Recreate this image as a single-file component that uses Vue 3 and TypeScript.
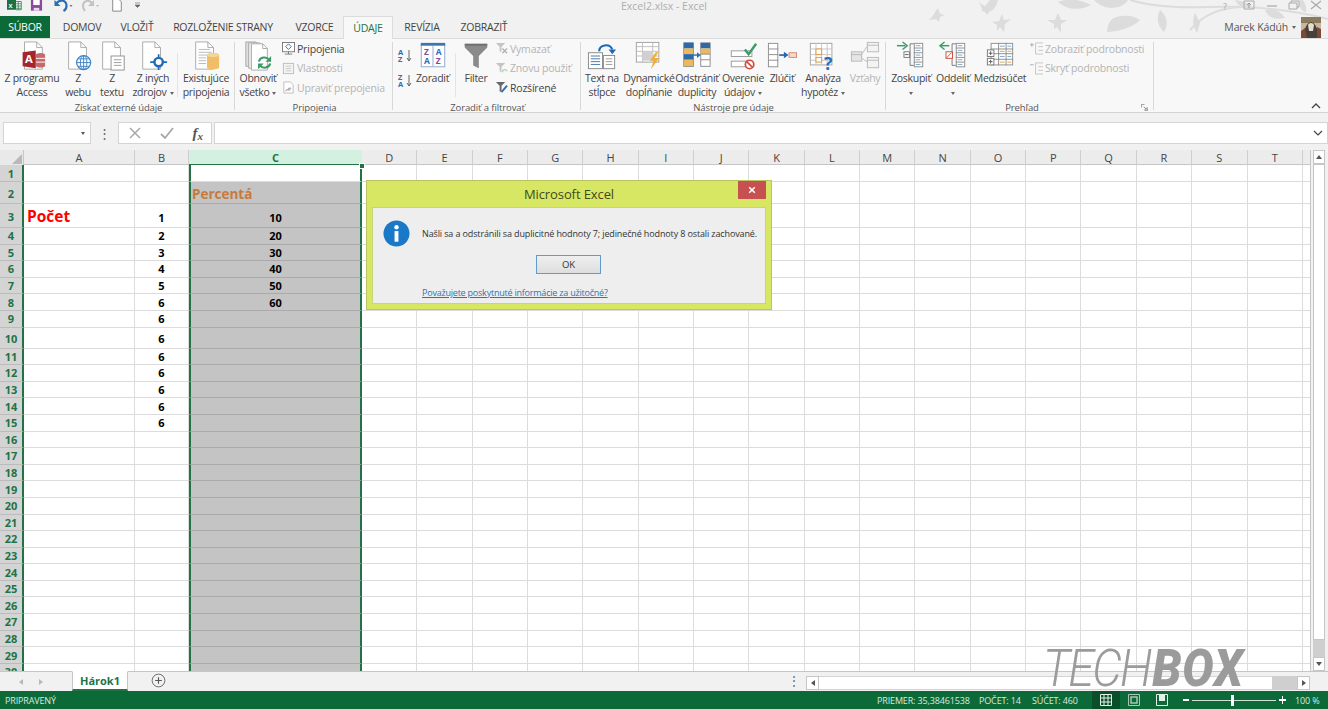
<template>
  <div class="excel">
    <!-- Title bar -->
    <header class="titlebar">
      <div class="qat">
        <svg class="qat-logo" viewBox="0 0 20 14"><rect width="12" height="14" y="-2" fill="#1d7044" /><text x="2" y="9" class="xl-letter">X</text><path d="M12 1h7v11h-7M12 4h7M12 7h7M12 10h7M15 1v11" fill="#fff" stroke="#1d7044" /></svg>
        <svg class="qat-save" viewBox="0 0 14 12"><path d="M1 -2h12v13H1z" fill="#8a4a9c" /><rect x="3.500" y="-1" width="7" height="6" fill="#fff" /><rect x="4" y="8" width="6" height="3" fill="#e8dcec" /></svg>
        <svg class="qat-undo" viewBox="0 0 20 12"><path d="M3 3c4-4 10-3 10 3 0 2-1 4-3 5" fill="none" stroke="#2b6fb3" stroke-width="2.200" /><path d="M1 0v6h6z" fill="#2b6fb3" /><path d="M16 5h3l-1.500 2z" fill="#777" /></svg>
        <svg class="qat-redo" viewBox="0 0 20 12"><path d="M12 3c-4-4-9-2-9 3 0 2 1 4 2 5" fill="none" stroke="#c2c2c2" stroke-width="2" /><path d="M14 0v6H8z" fill="#c2c2c2" /><path d="M16 5h3l-1.500 2z" fill="#bbb" /></svg>
        <svg class="qat-new" viewBox="0 0 12 14"><path d="M1 -2h6l4 4v11H1z" fill="#fff" stroke="#777" /></svg>
        <svg class="qat-more" viewBox="0 0 6 6"><path d="M0 1h5M0 3h5l-2.500 2.500z" fill="#666" stroke="#666" stroke-width=".6" /></svg>
      </div>
      <div class="doc-title">Excel2.xlsx - Excel</div>
      <svg class="birds" viewBox="918 0 410 37">
        <g fill="#dcdcdc">
          <path d="M928 20c3-1 6-5 7-8l3-4c1 3 1 5 3 6l4 1-5 2-1 5-3-3z" />
          <path d="M978 0c2 3 4 5 7 6l5-6h8c-1 5-4 10-9 12l-2 3-2-3-3-1c0-4-2-7-4-11z" />
          <path d="M992 22l7-1 3-7 2 6 7-1-6 5-1 8-4-5-3 4 0-6z" />
          <path d="M1047 20l8 0 3-7 3 7 6 0-6 4 0 9-4-6-3 2 0-5z" />
          <path d="M1058 2c9-4 22-3 33 3-9 5-23 6-33-3z" />
          <path d="M1094 0h34c-5 9-23 12-34 0z" />
          <path d="M1112 19c10-5 21-4 28 1-7 7-18 11-33 12 0-5 2-10 5-13z" />
          <path d="M1160 10c7 6 9 14 4 22-6-5-8-14-4-22z" />
          <path d="M1195 13l5 10-3 10c-4-6-5-13-2-20z" />
          <path d="M1235 0c8 1 14 3 17 8-8 1-14-2-17-8z" />
          <path d="M1265 10c9-2 16 1 20 8-9 2-17 0-20-8z" />
          <path d="M1300 -2c4 2 7 8 6 14-5 0-8-7-6-14z" />
        </g>
        <path d="M1130 0c20 6 50 8 78 7 35-1 70 0 120 12M1190 30c12-14 28-22 50-23" fill="none" stroke="#dcdcdc" stroke-width="2" />
      </svg>
      <div class="win-btns">
        <span class="help">?</span>
        <svg viewBox="0 0 12 10" class="w-box"><path d="M1 1h10v8H1z" fill="none" stroke="#aaa" /><path d="M6 8V3M4 5l2-2 2 2" fill="none" stroke="#999" /></svg>
        <svg viewBox="0 0 10 10" class="w-min"><path d="M0 6h10" stroke="#aaa" stroke-width="1.200" /></svg>
        <svg viewBox="0 0 12 10" class="w-res"><path d="M1 3h8v6H1zM3 3V1h8v6H9" fill="none" stroke="#aaa" /></svg>
        <svg viewBox="0 0 12 10" class="w-cls"><path d="M1 1l10 8M11 1L1 9" stroke="#aaa" stroke-width="1.200" /></svg>
      </div>
    </header>

    <!-- Tabs -->
    <nav class="tabs">
      <div class="tab file">SÚBOR</div>
      <div class="tab t-home">DOMOV</div>
      <div class="tab t-ins">VLOŽIŤ</div>
      <div class="tab t-lay">ROZLOŽENIE STRANY</div>
      <div class="tab t-for">VZORCE</div>
      <div class="tab active">ÚDAJE</div>
      <div class="tab t-rev">REVÍZIA</div>
      <div class="tab t-vie">ZOBRAZIŤ</div>
      <div class="user">
        <span class="user-name">Marek Kádúh</span>
        <span class="user-caret"></span>
        <svg class="avatar" viewBox="0 0 20 21">
          <rect width="20" height="21" fill="#c9b79a" />
          <rect width="20" height="6" fill="#8c7a5f" />
          <path d="M2 21c1-8 3-15 8-16 5 1 7 8 8 16z" fill="#4a3f38" />
          <path d="M7 8c2-3 5-2 6 0l-1 6H8z" fill="#e3ddd2" />
          <path d="M0 14l4-3 2 10H0zM16 10l4 2v9h-4z" fill="#7a4a35" />
        </svg>
      </div>
    </nav>

    <!-- Ribbon -->
    <section class="ribbon">
      <div class="group g-ext">
        <div class="group-body">
          <div class="big w-access">
            <svg class="icon" viewBox="0 0 32 32"><path d="M8 1h13l6 6v23H8z" fill="#fff" stroke="#a9a9a9" /><path d="M21 1v6h6" fill="none" stroke="#a9a9a9" /><path d="M20 15c0-3 10-3 10 0v11c0 3-10 3-10 0z" fill="#c46a6d" /><path d="M20 18.500h10M20 22.500h10" stroke="#fff" /><path d="M6 12l14-2v19L6 27z" fill="#a4262c" /><text x="8.500" y="23.500" class="ic-a">A</text></svg>
            <span class="lbl">Z programu<br />Access</span>
          </div>
          <div class="big w-web">
            <svg class="icon" viewBox="0 0 32 32"><path d="M6 1h13l6 6v23H6z" fill="#fff" stroke="#a9a9a9" /><path d="M19 1v6h6" fill="none" stroke="#a9a9a9" /><circle cx="22" cy="23" r="7.500" fill="#fff" stroke="#3f83c5" stroke-width="1.300" /><path d="M14.500 23h15M22 15.500v15M16 19h12M16 27h12" stroke="#3f83c5" /><ellipse cx="22" cy="23" rx="3.500" ry="7.500" fill="none" stroke="#3f83c5" /></svg>
            <span class="lbl">Z<br />webu</span>
          </div>
          <div class="big w-text">
            <svg class="icon" viewBox="0 0 32 32"><path d="M6 1h13l6 6v23H6z" fill="#fff" stroke="#a9a9a9" /><path d="M19 1v6h6" fill="none" stroke="#a9a9a9" /><rect x="15" y="16" width="14" height="15" fill="#fff" stroke="#8f8f8f" /><path d="M18 20h8M18 23h8M18 26h8" stroke="#9b9b9b" /></svg>
            <span class="lbl">Z<br />textu</span>
          </div>
          <div class="big w-other">
            <svg class="icon" viewBox="0 0 32 32"><path d="M5 1h13l6 6v23H5z" fill="#fff" stroke="#a9a9a9" /><path d="M18 1v6h6" fill="none" stroke="#a9a9a9" /><path d="M22 14v17M13 22.500h18" stroke="#1f6ab5" stroke-width="1.800" /><circle cx="22" cy="22.500" r="4.500" fill="#fff" stroke="#1f6ab5" stroke-width="2.600" /></svg>
            <span class="lbl">Z iných<br />zdrojov<i class="caret in"></i></span>
          </div>
          <div class="vsep"></div>
          <div class="big w-exist">
            <svg class="icon" viewBox="0 0 32 32"><path d="M5 1h13l6 6v23H5z" fill="#fff" stroke="#a9a9a9" /><path d="M18 1v6h6" fill="none" stroke="#a9a9a9" /><path d="M8 9h12M8 12h14M8 15h14M8 18h8M8 21h8M8 24h8" stroke="#b7b7b7" /><path d="M17 15c0-3 13-3 13 0v13c0 3-13 3-13 0z" fill="#efbe67" /><ellipse cx="23.500" cy="15" rx="6.500" ry="2" fill="#f6d696" /></svg>
            <span class="lbl">Existujúce<br />pripojenia</span>
          </div>
        </div>
        <div class="group-label">Získať externé údaje</div>
      </div>

      <div class="group g-conn">
        <div class="group-body">
          <div class="big w-refresh">
            <svg class="icon" viewBox="0 0 32 32"><path d="M3 1h11l5 5v21H3z" fill="#e0e0e0" stroke="#a9a9a9" /><path d="M6 2h12l5 5v22H6z" fill="#ececec" stroke="#a9a9a9" /><path d="M9 3h12l5 5v23H9z" fill="#fff" stroke="#a9a9a9" /><path d="M21 3v5h5" fill="none" stroke="#a9a9a9" /><path d="M17 22c1-5 8-6 11-2M29 24c-1 5-8 6-11 2" fill="none" stroke="#3f9a6a" stroke-width="2.200" /><path d="M30 16v6h-6zM16 30v-6h6z" fill="#3f9a6a" /></svg>
            <span class="lbl">Obnoviť<br />všetko<i class="caret in"></i></span>
          </div>
          <div class="smalls s-conn">
            <div class="small">
              <svg viewBox="0 0 14 14"><rect x=".5" y=".5" width="13" height="10" fill="#fff" stroke="#777" /><path d="M7 2l3 3-3 3-3-3z" fill="#fff" stroke="#2a6fb6" /><path d="M7 10v3M3 13h8" stroke="#777" /></svg>
              <span>Pripojenia</span>
            </div>
            <div class="small off">
              <svg viewBox="0 0 14 14"><rect x="1.500" y="1.500" width="11" height="11" fill="#f4f4f4" stroke="#bdbdbd" /><path d="M4 4.500h6M4 7h6M4 9.500h6" stroke="#c9c9c9" /></svg>
              <span>Vlastnosti</span>
            </div>
            <div class="small off">
              <svg viewBox="0 0 14 14"><path d="M2 1h7l3 3v9H2z" fill="#fff" stroke="#bdbdbd" /><path d="M4 11c0-2 4-2 5-1M10 8c-2-1-4 0-3 2" fill="none" stroke="#a8a8a8" stroke-width="1.300" /></svg>
              <span>Upraviť prepojenia</span>
            </div>
          </div>
        </div>
        <div class="group-label">Pripojenia</div>
      </div>

      <div class="group g-sort">
        <div class="group-body">
          <div class="sort-col">
            <div class="sort-ic"><span class="az"><b class="b">A</b><b class="p">Z</b></span><svg viewBox="0 0 6 14"><path d="M3 1v11M1 9l2 3 2-3" fill="none" stroke="#666" /></svg></div>
            <div class="sort-ic"><span class="az"><b class="p">Z</b><b class="b">A</b></span><svg viewBox="0 0 6 14"><path d="M3 1v11M1 9l2 3 2-3" fill="none" stroke="#666" /></svg></div>
          </div>
          <div class="big w-zor">
            <svg class="icon" viewBox="0 0 32 32"><rect x="3.500" y="3.500" width="25" height="24" fill="#fff" stroke="#8aa7c8" /><rect x="3" y="2" width="26" height="3" fill="#3f75ad" /><path d="M16 5v22" stroke="#8aa7c8" /><text x="6.500" y="14.500" class="ic-p">Z</text><text x="19" y="14.500" class="ic-b">A</text><text x="6.500" y="24.500" class="ic-b">A</text><text x="19" y="24.500" class="ic-p">Z</text></svg>
            <span class="lbl">Zoradiť</span>
          </div>
          <div class="vsep sep-sort"></div>
          <div class="big w-filter">
            <svg class="icon" viewBox="0 0 32 32"><path d="M4 3h24v4l-9 9v13l-6-3V16L4 7z" fill="#8a8a8a" /><path d="M4 3h24v2H4z" fill="#6f6f6f" /></svg>
            <span class="lbl">Filter</span>
          </div>
          <div class="smalls s-filter">
            <div class="small off">
              <svg viewBox="0 0 14 14"><path d="M1 1h10l-4 4v6l-2-1V5z" fill="#c4c4c4" /><path d="M8 7l5 5M13 7l-5 5" stroke="#b3b3b3" stroke-width="1.500" /></svg>
              <span>Vymazať</span>
            </div>
            <div class="small off">
              <svg viewBox="0 0 14 14"><path d="M1 1h10l-4 4v6l-2-1V5z" fill="#c4c4c4" /><path d="M8 11c0-3 4-4 5-1" fill="none" stroke="#b7cfc1" stroke-width="1.500" /></svg>
              <span>Znovu použiť</span>
            </div>
            <div class="small">
              <svg viewBox="0 0 14 14"><path d="M1 1h10l-4 4v7l-2-1V5z" fill="#666" /><path d="M7 12l6-7" stroke="#2a6fb6" stroke-width="2" /></svg>
              <span>Rozšírené</span>
            </div>
          </div>
        </div>
        <div class="group-label">Zoradiť a filtrovať</div>
      </div>

      <div class="group g-tools">
        <div class="group-body">
          <div class="big w-split">
            <svg class="icon" viewBox="0 0 32 32"><rect x="1.500" y="12.500" width="15" height="17" fill="#fff" stroke="#888" /><path d="M4 16h10M4 19h10M4 22h10M4 25h10" stroke="#3f75ad" /><rect x="17.500" y="15.500" width="12" height="14" fill="#fff" stroke="#888" /><path d="M20 19h7M20 22h7M20 25h7" stroke="#999" /><path d="M13 11c0-7 11-9 14-2" fill="none" stroke="#1f6ab5" stroke-width="2.200" /><path d="M23 9h8l-4 5z" fill="#1f6ab5" /></svg>
            <span class="lbl">Text na<br />stĺpce</span>
          </div>
          <div class="big w-dyn">
            <svg class="icon" viewBox="0 0 32 32"><rect x="2.500" y="1.500" width="24" height="21" fill="#fff" stroke="#a0a0a0" /><path d="M2 6h24M2 11h24M2 16h24M9 1.500v21M20 1.500v21" stroke="#bdbdbd" /><rect x="9" y="11" width="11" height="10" fill="#d0d0d0" /><path d="M23 12l-6 9h4l-3 9 9-12h-5l4-6z" fill="#f0ad3d" /></svg>
            <span class="lbl">Dynamické<br />dopĺňanie</span>
          </div>
          <div class="big w-dup">
            <svg class="icon" viewBox="0 0 32 32"><rect x="2" y="2" width="10" height="25" fill="#fff" stroke="#44719f" /><rect x="2" y="2" width="10" height="6" fill="#2f6aa6" /><rect x="2" y="8" width="10" height="6" fill="#ebb85c" /><rect x="2" y="14" width="10" height="6" fill="#2f6aa6" /><rect x="2" y="20" width="10" height="7" fill="#ebb85c" /><rect x="20" y="2" width="10" height="25" fill="#fff" stroke="#8c8c8c" /><rect x="20" y="2" width="10" height="6" fill="#2f6aa6" /><rect x="20" y="8" width="10" height="6" fill="#ebb85c" /><path d="M20 14h10M20 20h10" stroke="#8c8c8c" /><path d="M12 15h5" stroke="#2a6fb6" stroke-width="1.500" /><path d="M16 12l4 3-4 3z" fill="#2a6fb6" /></svg>
            <span class="lbl">Odstrániť<br />duplicity</span>
          </div>
          <div class="big w-val">
            <svg class="icon" viewBox="0 0 32 32"><rect x="3.500" y="10.500" width="22" height="6" fill="#fff" stroke="#9a9a9a" /><rect x="3.500" y="21.500" width="18" height="6" fill="#fff" stroke="#9a9a9a" /><path d="M18 9l4 5 8-11" fill="none" stroke="#3f9a6a" stroke-width="2.600" /><circle cx="23" cy="25" r="4.500" fill="#fff" stroke="#d14b3c" stroke-width="1.800" /><path d="M20 22l6 6" stroke="#d14b3c" stroke-width="1.800" /></svg>
            <span class="lbl">Overenie<br />údajov<i class="caret in"></i></span>
          </div>
          <div class="big w-cons">
            <svg class="icon" viewBox="0 0 32 32"><rect x="1.500" y="2.500" width="10" height="25" fill="#fff" stroke="#8c8c8c" /><path d="M2 8.500h10M2 14.500h10M2 20.500h10" stroke="#8c8c8c" /><path d="M13 15h6" stroke="#1f6ab5" stroke-width="1.800" /><path d="M18 11.500l5 3.500-5 3.500z" fill="#1f6ab5" /><rect x="23.500" y="12.500" width="8" height="5" fill="#f6d8cc" stroke="#d48872" /></svg>
            <span class="lbl">Zlúčiť</span>
          </div>
          <div class="big w-what">
            <svg class="icon" viewBox="0 0 32 32"><rect x="2.500" y="2.500" width="23" height="23" fill="#fff" stroke="#a0a0a0" /><path d="M2 8.500h23M2 14.500h23M2 20.500h23M8.500 2v23M14.500 2v23M20.500 2v23" stroke="#c4c4c4" /><rect x="8.500" y="8.500" width="6" height="6" fill="#fff" stroke="#e0973c" /><rect x="8.500" y="17.500" width="6" height="5" fill="#fff" stroke="#e0973c" /><text x="17" y="31" class="ic-q">?</text></svg>
            <span class="lbl">Analýza<br />hypotéz<i class="caret in"></i></span>
          </div>
          <div class="big w-rel">
            <svg class="icon" viewBox="0 0 32 32"><rect x="1.500" y="11.500" width="11" height="10" fill="#e6e6e6" stroke="#b8b8b8" /><rect x="18.500" y="1.500" width="12" height="10" fill="#f3f3f3" stroke="#b8b8b8" /><rect x="18.500" y="17.500" width="12" height="11" fill="#f3f3f3" stroke="#b8b8b8" /><path d="M1 14.500h11M18 4.500h12M18 20.500h12" stroke="#b8b8b8" /><path d="M12 15l6-9M12 18l6 4" stroke="#bbb" /></svg>
            <span class="lbl off">Vzťahy</span>
          </div>
        </div>
        <div class="group-label">Nástroje pre údaje</div>
      </div>

      <div class="group g-out">
        <div class="group-body">
          <div class="big w-grp">
            <svg class="icon" viewBox="0 0 32 32"><path d="M1 5h9" stroke="#3f9a6a" stroke-width="1.600" /><path d="M7 1l5 4-5 4" fill="none" stroke="#3f9a6a" stroke-width="1.500" /><path d="M19 3h-4v23h4M15 14h-2" fill="none" stroke="#777" /><rect x="8.500" y="11.500" width="6" height="6" fill="#fff" stroke="#777" /><path d="M9.500 14.500h4" stroke="#555" /><rect x="19.500" y="2.500" width="9" height="25" fill="#fff" stroke="#8c8c8c" /><path d="M19 7.500h9M19 12.500h9M19 17.500h9M19 22.500h9" stroke="#8c8c8c" /><path d="M21 5h5M21 10h5M21 15h5M21 20h5M21 25h5" stroke="#7aa5c8" /></svg>
            <span class="lbl">Zoskupiť<br /><i class="caret"></i></span>
          </div>
          <div class="big w-ungrp">
            <svg class="icon" viewBox="0 0 32 32"><path d="M3 5h9" stroke="#3f9a6a" stroke-width="1.600" /><path d="M7 1L2 5l5 4" fill="none" stroke="#3f9a6a" stroke-width="1.500" /><path d="M19 3h-4v23h4" fill="none" stroke="#777" /><rect x="8.500" y="11.500" width="7" height="7" fill="#fff" stroke="#d14b3c" /><path d="M9 18l6-6" stroke="#d14b3c" /><rect x="19.500" y="2.500" width="9" height="25" fill="#fff" stroke="#8c8c8c" /><path d="M19 7.500h9M19 12.500h9M19 17.500h9M19 22.500h9" stroke="#8c8c8c" /><path d="M21 5h5M21 10h5M21 15h5M21 20h5M21 25h5" stroke="#7aa5c8" /></svg>
            <span class="lbl">Oddeliť<br /><i class="caret"></i></span>
          </div>
          <div class="big w-sub">
            <svg class="icon" viewBox="0 0 32 32"><rect x="6.500" y="2.500" width="23" height="23" fill="#fff" stroke="#8c8c8c" /><path d="M6 8.500h24M6 13.500h24M6 19.500h24M14.500 2v24M22.500 2v24" stroke="#8c8c8c" /><path d="M16 5.500h5M24 5.500h4M16 16.500h5M24 16.500h4" stroke="#7aa5c8" /><path d="M16 11h5M24 11h4M16 22.500h5M24 22.500h4" stroke="#e0a04a" /><rect x="2.500" y="9.500" width="7" height="7" fill="#fff" stroke="#777" /><rect x="2.500" y="18.500" width="7" height="7" fill="#fff" stroke="#777" /><path d="M4 13h4M6 11v4M4 22h4M6 20v4" stroke="#555" /></svg>
            <span class="lbl">Medzisúčet</span>
          </div>
          <div class="smalls s-out">
            <div class="small off">
              <svg viewBox="0 0 14 14"><path d="M0 3h4M2 1v4" stroke="#aaa" /><path d="M9 1H6v12h3M9 1h5M9 5h5M9 9h5M9 13h5" fill="none" stroke="#c4c4c4" /></svg>
              <span>Zobraziť podrobnosti</span>
            </div>
            <div class="small off">
              <svg viewBox="0 0 14 14"><path d="M0 3h4" stroke="#aaa" /><path d="M9 1H6v12h3M9 1h5M9 5h5M9 9h5M9 13h5" fill="none" stroke="#c4c4c4" /></svg>
              <span>Skryť podrobnosti</span>
            </div>
          </div>
        </div>
        <div class="group-label">Prehľad<svg class="launcher" viewBox="0 0 8 8"><path d="M.5 4V.5H4M7.500 4v3.500H4M3 3l3 3M6 4v2H4" fill="none" stroke="#777" stroke-width=".8" /></svg></div>
      </div>

      <div class="ribbon-rest">
        <svg viewBox="0 0 10 6"><path d="M1 5l4-4 4 4" fill="none" stroke="#444" stroke-width="1.300" /></svg>
      </div>
    </section>

    <!-- Formula bar -->
    <div class="formula">
      <div class="namebox"><i class="caret dark"></i></div>
      <div class="dots">⋮</div>
      <div class="fx-btns">
        <svg viewBox="0 0 14 14"><path d="M2 2l10 10M12 2L2 12" stroke="#a8a8a8" stroke-width="1.500" /></svg>
        <svg viewBox="0 0 14 14"><path d="M1 8l4 4 8-10" fill="none" stroke="#a8a8a8" stroke-width="1.800" /></svg>
        <span class="fx">f<sub>x</sub></span>
      </div>
      <div class="fx-input">
        <svg viewBox="0 0 10 6"><path d="M1 1l4 4 4-4" fill="none" stroke="#444" stroke-width="1.200" /></svg>
      </div>
    </div>

    <!-- Sheet -->
    <main class="sheet">
      <div class="grid-wrap">
        <div class="grid">
          <div class="corner"><span class="corner-tri"></span></div>
          <div
            v-for="c in columns"
            :key="c"
            class="col-head"
            :class="{ sel: c === 'C' }"
          >{{ c.trim() }}</div>
          <template v-for="r in rows" :key="r">
            <div class="row-head" :class="{ 'r-low': r === 2 || r === 3 || r === 10 }">{{ r }}</div>
            <div
              v-for="c in columns"
              :key="c"
              class="cell"
              :class="cellClass(r, c)"
            >{{ cellText(r, c) }}</div>
          </template>
        </div>
        <span class="fill-handle"></span>
      </div>
      <div class="vscroll">
        <div class="sb-btn"><i class="tri up"></i></div>
        <div class="sb-thumb"></div>
        <div class="sb-track"></div>
        <div class="sb-btn"><i class="tri down"></i></div>
      </div>

      <!-- Dialog -->
      <div class="dialog">
        <div class="dlg-title">
          <span>Microsoft Excel</span>
          <div class="dlg-close">
            <svg viewBox="0 0 10 10"><path d="M1.500 1.500l7 7M8.500 1.500l-7 7" stroke="#fff" stroke-width="2" /></svg>
          </div>
        </div>
        <div class="dlg-body">
          <div class="dlg-msg">
            <svg class="info" viewBox="0 0 28 28">
              <circle cx="14" cy="14" r="13.500" fill="#1a78c8" />
              <circle cx="14" cy="7.500" r="2.300" fill="#fff" />
              <rect x="12" y="11.500" width="4" height="11" fill="#fff" />
            </svg>
            <span>Našli sa a odstránili sa duplicitné hodnoty 7; jedinečné hodnoty 8 ostali zachované.</span>
          </div>
          <div class="dlg-ok">OK</div>
          <a class="dlg-link">Považujete poskytnuté informácie za užitočné?</a>
        </div>
      </div>
    </main>

    <!-- Sheet tabs -->
    <div class="sheetbar">
      <div class="nav-arrows"><i class="tri left soft"></i><i class="tri right soft"></i></div>
      <div class="sheet-tab">Hárok1</div>
      <svg class="add" viewBox="0 0 16 16"><circle cx="8" cy="8" r="6.800" fill="none" stroke="#666" /><path d="M4.500 8h7M8 4.500v7" stroke="#555" stroke-width="1.200" /></svg>
      <div class="dots hdots">⋮</div>
      <div class="hscroll">
        <div class="hs-btn"><i class="tri left"></i></div>
        <div class="hs-track"></div>
        <div class="hs-thumb"></div>
        <div class="hs-btn"><i class="tri right"></i></div>
      </div>
    </div>

    <!-- Status bar -->
    <footer class="status">
      <span class="ready">PRIPRAVENÝ</span>
      <span class="st-a">PRIEMER: 35,38461538</span>
      <span class="st-b">POČET: 14</span>
      <span class="st-c">SÚČET: 460</span>
      <div class="view active-view">
        <svg viewBox="0 0 12 12"><path d="M.5.500h11v11H.5zM.5 4h11M.5 8h11M4 .5v11M8 .5v11" fill="none" stroke="#e4efe8" /></svg>
      </div>
      <div class="view">
        <svg viewBox="0 0 12 12"><path d="M.5.500h11v11H.5z" fill="none" stroke="#a9c6b6" /><path d="M3 3h6v6H3z" fill="none" stroke="#a9c6b6" stroke-width="1.500" /></svg>
      </div>
      <div class="view">
        <svg viewBox="0 0 12 12"><path d="M.5.500h11v11H.5z" fill="none" stroke="#e4efe8" /><path d="M3 0h6v7H3z" fill="#e4efe8" /></svg>
      </div>
      <div class="zoom">
        <span class="z-minus"></span>
        <div class="z-track"><span class="z-thumb"></span></div>
        <span class="z-plus"></span>
      </div>
      <span class="st-zoom">100 %</span>
    </footer>

    <!-- Watermark -->
    <div class="watermark"><span class="wm-a">TECH</span><span class="wm-b">BOX</span></div>
  </div>
</template>

<script setup lang="ts">
// last entry is the partly visible column at the right edge, it has no label
const columns = ["A", "B", "C", "D", "E", "F", "G", "H", "I", "J", "K", "L", "M", "N", "O", "P", "Q", "R", "S", "T", " "];
const rows = Array.from({ length: 30 }, (_, i) => i + 1);

const colB: Record<number, string> = {
  3: "1", 4: "2", 5: "3", 6: "4", 7: "5", 8: "6", 9: "6",
  10: "6", 11: "6", 12: "6", 13: "6", 14: "6", 15: "6",
};
const colC: Record<number, string> = {
  2: "Percentá", 3: "10", 4: "20", 5: "30", 6: "40", 7: "50", 8: "60",
};

function cellText(r: number, c: string): string {
  if (c === "A" && r === 3) return "Počet";
  if (c === "B") return colB[r] ?? "";
  if (c === "C") return colC[r] ?? "";
  return "";
}

function cellClass(r: number, c: string) {
  return {
    "c-sel": c === "C",
    "c-gray": c === "C" && r > 1,
    "c-num": (c === "B" && colB[r]) || (c === "C" && r > 2 && colC[r]),
    "c-count": c === "A" && r === 3,
    "c-pct": c === "C" && r === 2,
    "c-low": r === 3 && c !== "A",
    "c-low-s": r === 10 && c === "B",
  };
}
</script>

<style scoped>
.excel {
  position: relative;
  display: flex;
  flex-direction: column;
  width: 1328px;
  height: 709px;
  overflow: hidden;
  background: #f1f1f1;
  font-family: "Open Sans", "Noto Sans", sans-serif;
  color: #444;
}

/* Title bar */
.titlebar {
  position: relative;
  height: 16px;
  flex: none;
}
.qat {
  display: flex;
  align-items: flex-start;
  height: 12px;
  padding-left: 7px;
}
.qat svg { display: block; flex: none; }
.qat-logo { width: 15px; height: 12px; }
.qat-save { width: 13px; height: 12px; margin-left: 8px; }
.qat-undo { width: 21px; height: 12px; margin-left: 10px; }
.qat-redo { width: 20px; height: 12px; margin-left: 6px; }
.qat-new { width: 12px; height: 12px; margin-left: 11px; }
.qat-more { width: 6px; height: 6px; margin: 2px 0 0 12px; }
.xl-letter { font: 700 8px "Open Sans", sans-serif; fill: #fff; }
.doc-title {
  position: absolute;
  left: 0;
  right: 0;
  top: 0;
  text-align: center;
  font-size: 10.500px;
  line-height: 13px;
  color: #aeaeae;
}
.birds {
  position: absolute;
  left: 918px;
  top: 0;
  width: 410px;
  height: 37px;
}
.win-btns {
  position: absolute;
  top: 0;
  left: 0;
  right: 0;
}
.win-btns > * { position: absolute; top: 0; }
.help { left: 1223px; font-size: 9px; line-height: 13px; color: #aaa; }
.w-box { left: 1243px; width: 12px; height: 10px; }
.w-min { left: 1267px; width: 10px; height: 10px; }
.w-res { left: 1288px; width: 12px; height: 10px; }
.w-cls { left: 1310px; width: 12px; height: 10px; }

/* Tabs */
.tabs {
  position: relative;
  display: flex;
  align-items: stretch;
  flex: none;
  height: 22px;
  font-size: 10.500px;
  letter-spacing: -0.25px;
}
.tab {
  display: flex;
  align-items: center;
  justify-content: center;
  color: #444;
  padding-bottom: 1px;
}
.tab.file { width: 50px; background: #0b6a37; color: #fff; }
.t-home { width: 64px; }
.t-ins { width: 46px; }
.t-lay { width: 126px; }
.t-for { width: 57px; }
.tab.active {
  width: 50px;
  background: #f8f8f8;
  color: #217346;
  border: 1px solid #dcdcdc;
  border-bottom: none;
  box-sizing: border-box;
  height: 23px;
  z-index: 1;
}
.t-rev { width: 58px; }
.t-vie { width: 66px; }
.user {
  margin-left: auto;
  display: flex;
  align-items: center;
  padding-right: 7px;
  z-index: 1;
}
.user-name { color: #555; font-size: 10.500px; letter-spacing: -0.15px; }
.user-caret {
  border: 2.500px solid transparent;
  border-top: 3px solid #666;
  margin: 3px 5px 0 4px;
}
.avatar { width: 20px; height: 21px; display: block; }

/* Ribbon */
.ribbon {
  display: flex;
  flex: none;
  height: 75px;
  box-sizing: border-box;
  background: #f8f8f8;
  border-top: 1px solid #dcdcdc;
  border-bottom: 1px solid #d4d4d4;
}
.group {
  display: flex;
  flex-direction: column;
  flex: none;
  box-sizing: border-box;
  position: relative;
}
.group::after {
  content: "";
  position: absolute;
  right: 0;
  top: 3px;
  bottom: 2px;
  width: 1px;
  background: #d8d8d8;
}
.g-ext { width: 235px; padding-left: 2px; }
.g-conn { width: 158px; padding-left: 1px; }
.g-sort { width: 188px; padding-left: 1px; }
.g-tools { width: 305px; }
.g-out { width: 268px; padding-left: 4px; }
.group-body {
  flex: 1;
  display: flex;
  min-height: 0;
}
.group-label {
  position: relative;
  flex: none;
  height: 11px;
  line-height: 13px;
  text-align: center;
  font-size: 9.500px;
  letter-spacing: -0.1px;
  color: #555;
}
.launcher {
  position: absolute;
  right: 6px;
  top: 3px;
  width: 7px;
  height: 7px;
}
.big {
  display: flex;
  flex-direction: column;
  align-items: center;
  flex: none;
  padding-top: 3px;
  box-sizing: border-box;
  font-size: 10.500px;
  letter-spacing: -0.3px;
  line-height: 14px;
  color: #444;
  text-align: center;
  white-space: nowrap;
}
.big .icon {
  display: block;
  flex: none;
  width: 30px;
  height: 30px;
  margin-top: -1px;
  overflow: visible;
}
.lbl { display: block; flex: none; }
.lbl.off { color: #b4b4b4; }
.w-access { width: 60px; }
.w-web { width: 32px; }
.w-text { width: 36px; }
.w-other { width: 46px; }
.w-exist { width: 54px; }
.vsep {
  flex: none;
  width: 1px;
  margin: 14px 1px 4px 1px;
  background: #e4e4e4;
}
.w-refresh { width: 44px; }
.smalls {
  display: flex;
  flex-direction: column;
  flex: none;
  font-size: 10.500px;
  letter-spacing: -0.2px;
  white-space: nowrap;
}
.s-conn { margin-left: 2px; }
.s-filter { margin-left: 1px; }
.s-out { margin-left: 4px; }
.small {
  display: flex;
  align-items: center;
  gap: 1px;
  height: 19.500px;
  color: #444;
}
.small svg { width: 13px; height: 13px; flex: none; margin-right: 1px; }
.small.off { color: #b4b4b4; }
.sort-col {
  display: flex;
  flex-direction: column;
  gap: 11px;
  width: 20px;
  padding: 10px 0 0 4px;
  box-sizing: border-box;
}
.sort-ic { display: flex; height: 14px; }
.sort-ic svg { width: 6px; height: 14px; }
.az {
  display: flex;
  flex-direction: column;
  width: 8px;
  font-size: 7.500px;
  line-height: 7px;
}
.az .b, .ic-b { color: #2a6fb6; fill: #2a6fb6; }
.az .p, .ic-p { color: #8a4a9c; fill: #8a4a9c; }
.ic-a { font: 700 12px "Open Sans", sans-serif; fill: #fff; }
.ic-b, .ic-p { font: 700 9px "Open Sans", sans-serif; }
.ic-q { font: 700 19px "Open Sans", sans-serif; fill: #2a6fb6; }
.w-zor { width: 37px; }
.w-filter { width: 36px; }
.sep-sort { margin-left: 4px; margin-right: 2px; }
.w-split { width: 42px; }
.w-dyn { width: 52px; }
.w-dup { width: 44px; }
.w-val { width: 48px; }
.w-cons { width: 30px; }
.w-what { width: 52px; }
.w-rel { width: 32px; }
.w-grp { width: 42px; }
.w-ungrp { width: 42px; }
.w-sub { width: 52px; }
.ribbon-rest {
  flex: 1;
  position: relative;
}
.ribbon-rest svg {
  position: absolute;
  right: 7px;
  bottom: 3px;
  width: 10px;
  height: 6px;
}
.caret {
  display: inline-block;
  vertical-align: middle;
  border: 2.500px solid transparent;
  border-top: 3px solid #666;
  border-bottom: none;
}
.caret.in { margin-left: 3px; }
.caret.dark { border-top-color: #555; }

/* Formula bar */
.formula {
  display: flex;
  flex: none;
  height: 22px;
  margin: 9px 0 6px;
  padding-left: 3px;
  box-sizing: border-box;
  align-items: stretch;
}
.namebox {
  width: 88px;
  background: #fff;
  border: 1px solid #d4d4d4;
  box-sizing: border-box;
  display: flex;
  align-items: center;
  justify-content: flex-end;
  padding-right: 5px;
}
.dots {
  width: 27px;
  text-align: center;
  font-size: 13px;
  line-height: 22px;
  color: #666;
}
.fx-btns {
  display: flex;
  align-items: center;
  justify-content: space-between;
  width: 94px;
  background: #fff;
  border: 1px solid #d4d4d4;
  box-sizing: border-box;
  padding: 0 8px 0 9px;
}
.fx-btns svg { width: 14px; height: 14px; }
.fx {
  font-family: "Liberation Serif", serif;
  font-style: italic;
  font-weight: 700;
  font-size: 15px;
  line-height: 16px;
  color: #555;
}
.fx sub { font-size: 11px; vertical-align: -2px; line-height: 0; }
.fx-input {
  flex: 1;
  margin-left: 2px;
  background: #fff;
  border: 1px solid #d4d4d4;
  box-sizing: border-box;
  display: flex;
  align-items: center;
  justify-content: flex-end;
  padding-right: 4px;
}
.fx-input svg { width: 10px; height: 6px; }

/* Sheet */
.sheet {
  position: relative;
  flex: 1;
  min-height: 0;
  display: flex;
  overflow: hidden;
}
.grid-wrap {
  position: relative;
  width: 1311px;
  flex: none;
  background: #fff;
  border-right: 1px solid #c6c6c6;
  box-sizing: border-box;
  overflow: hidden;
}
.grid {
  display: grid;
  grid-template-columns: 24px 111px 54px 173px repeat(17, 55.350px) 8px;
  grid-template-rows: 15px 17px 22px 24px repeat(6, 16.600px) 21px repeat(20, 16.600px);
  font-size: 11px;
}
.corner {
  position: relative;
  background: #e9e9e9;
  border-right: 1px solid #c6c6c6;
  box-sizing: border-box;
}
.corner-tri {
  position: absolute;
  right: 1px;
  bottom: 1px;
  border: 5.500px solid transparent;
  border-right-color: #b9b9b9;
  border-bottom-color: #b9b9b9;
}
.col-head {
  display: flex;
  align-items: center;
  justify-content: center;
  background: #ececec;
  border-right: 1px solid #cfcfcf;
  border-bottom: 1px solid #c6c6c6;
  box-sizing: border-box;
  color: #444;
}
.col-head.sel {
  background: #d3f0e0;
  color: #217346;
  font-weight: 700;
  border-right: none;
  border-bottom: 1px solid #217346;
}
.row-head {
  display: flex;
  align-items: center;
  justify-content: center;
  background: #d4d4d4;
  border-right: 2px solid #217346;
  border-bottom: 1px solid #bcbcbc;
  box-sizing: border-box;
  color: #217346;
  font-weight: 700;
  font-size: 11px;
}
.r-low { padding-top: 2px; }
.cell {
  display: flex;
  align-items: center;
  background: #fff;
  border-right: 1px solid #dcdcdc;
  border-bottom: 1px solid #dcdcdc;
  box-sizing: border-box;
  overflow: hidden;
  white-space: nowrap;
  color: #000;
}
.c-sel {
  border-left: 2px solid #217346;
  border-right: 2px solid #217346;
}
.c-gray {
  background: #c4c4c4;
  border-bottom-color: #aaaaaa;
}
.c-num { justify-content: center; font-weight: 700; }
.c-low { padding-top: 3px; }
.c-low-s { padding-top: 1px; }
.c-count {
  padding-left: 3px;
  color: #f00;
  font-weight: 700;
  font-size: 15.500px;
}
.c-pct {
  padding-left: 1px;
  padding-top: 2px;
  color: #c67a3e;
  font-weight: 700;
  font-size: 13.500px;
}
.fill-handle {
  position: absolute;
  left: 359px;
  top: 13px;
  width: 4px;
  height: 4px;
  background: #217346;
  border: 1px solid #fff;
}
.vscroll {
  flex: 1;
  display: flex;
  flex-direction: column;
  background: #f1f1f1;
  padding: 0 3px 0 2px;
}
.sb-btn {
  flex: none;
  height: 14px;
  display: flex;
  align-items: center;
  justify-content: center;
  background: #fff;
  border: 1px solid #c6c6c6;
  box-sizing: border-box;
}
.sb-thumb {
  flex: none;
  height: 476px;
  background: #fff;
  border: 1px solid #c6c6c6;
  box-sizing: border-box;
}
.sb-track {
  flex: 1;
  background: #cfcfcf;
}
.tri { display: block; border: 3px solid transparent; width: 0; height: 0; }
.tri.up { border-bottom: 4px solid #555; border-top: none; }
.tri.down { border-top: 4px solid #555; border-bottom: none; }
.tri.left { border-right: 4px solid #555; border-left: none; }
.tri.right { border-left: 4px solid #555; border-right: none; }
.tri.left.soft { border-right-color: #b8b8b8; }
.tri.right.soft { border-left-color: #b8b8b8; }

/* Dialog */
.dialog {
  position: absolute;
  left: 366px;
  top: 30px;
  width: 406px;
  height: 130px;
  box-sizing: border-box;
  display: flex;
  flex-direction: column;
  background: #d7e763;
  border: 1px solid #b9c462;
  padding: 0 5px 5px;
}
.dlg-title {
  position: relative;
  height: 26px;
  flex: none;
  display: flex;
  align-items: center;
  justify-content: center;
  font-size: 13px;
  letter-spacing: -0.1px;
  color: #3f4a20;
}
.dlg-close {
  position: absolute;
  right: 0;
  top: 0;
  width: 28px;
  height: 18px;
  background: #c75050;
  display: flex;
  align-items: center;
  justify-content: center;
}
.dlg-close svg { width: 8px; height: 8px; }
.dlg-body {
  flex: 1;
  display: flex;
  flex-direction: column;
  background: #eeeeee;
  border: 1px solid #c9d27c;
  box-sizing: border-box;
  padding: 11px 10px 0;
  color: #333;
  font-size: 9px;
}
.dlg-msg {
  display: flex;
  align-items: center;
  gap: 12px;
  height: 28px;
  white-space: nowrap;
  letter-spacing: -0.13px;
}
.info { width: 27px; height: 27px; flex: none; }
.dlg-ok {
  align-self: center;
  width: 65px;
  height: 19px;
  margin-top: 8px;
  margin-left: -1px;
  box-sizing: border-box;
  border: 1px solid #5f9bd0;
  background: linear-gradient(#efefef, #dedede);
  display: flex;
  align-items: center;
  justify-content: center;
  font-size: 9.500px;
}
.dlg-link {
  margin: 12px 0 0 39px;
  color: #2a75b8;
  text-decoration: underline;
  letter-spacing: -0.22px;
}

/* Sheet tabs */
.sheetbar {
  position: relative;
  display: flex;
  align-items: stretch;
  flex: none;
  height: 20px;
  background: #f1f1f1;
  border-top: 1px solid #c6c6c6;
  box-sizing: border-box;
}
.nav-arrows {
  display: flex;
  align-items: center;
  gap: 16px;
  width: 72px;
  box-sizing: border-box;
  padding-left: 19px;
}
.sheet-tab {
  width: 54px;
  height: 17px;
  margin-top: -1px;
  background: #fff;
  border: 1px solid #c6c6c6;
  border-top-color: #fff;
  border-bottom: 2px solid #217346;
  display: flex;
  align-items: center;
  justify-content: center;
  color: #217346;
  font-weight: 700;
  font-size: 11px;
}
.add {
  width: 15px;
  height: 15px;
  margin: 1px 0 0 23px;
  flex: none;
}
.hdots {
  width: 12px;
  margin-left: 622px;
  line-height: 18px;
  font-size: 12px;
}
.hscroll {
  display: flex;
  margin-left: 6px;
  width: 504px;
  height: 14px;
  margin-top: 4px;
}
.hs-btn {
  width: 13px;
  flex: none;
  display: flex;
  align-items: center;
  justify-content: center;
  background: #fff;
  border: 1px solid #c6c6c6;
  box-sizing: border-box;
}
.hs-track {
  flex: 1;
  background: #fff;
  border-top: 1px solid #d4d4d4;
  border-bottom: 1px solid #d4d4d4;
}
.hs-thumb { width: 25px; background: #cfcfcf; }

/* Status bar */
.status {
  display: flex;
  align-items: center;
  flex: none;
  height: 18px;
  background: #0b6a37;
  color: #dbe9e1;
  font-size: 9px;
  letter-spacing: -0.15px;
  white-space: nowrap;
}
.ready { margin-left: 5px; width: 872px; }
.st-a { width: 102px; }
.st-b { width: 53px; }
.st-c { width: 60px; }
.view {
  width: 28px;
  height: 18px;
  display: flex;
  align-items: center;
  justify-content: center;
}
.view svg { width: 12px; height: 12px; }
.active-view { background: #084f2a; }
.zoom {
  display: flex;
  align-items: center;
  margin-left: 7px;
  width: 103px;
}
.z-minus { width: 6px; height: 1.500px; background: #fff; flex: none; }
.z-track {
  position: relative;
  flex: 1;
  height: 1px;
  margin: 0 3px;
  background: #cfe0d6;
}
.z-thumb {
  position: absolute;
  left: 39px;
  top: -5px;
  width: 3px;
  height: 11px;
  background: #fff;
}
.z-plus {
  position: relative;
  width: 7px;
  height: 1.500px;
  background: #fff;
  flex: none;
}
.z-plus::after {
  content: "";
  position: absolute;
  left: 2.750px;
  top: -3px;
  width: 1.500px;
  height: 7.500px;
  background: #fff;
}
.st-zoom { margin-left: 9px; }

/* Watermark */
.watermark {
  position: absolute;
  left: 1043px;
  top: 648px;
  font-family: "Roboto", "Liberation Sans", sans-serif;
  font-style: italic;
  font-size: 52px;
  line-height: 42px;
  color: #9b9b9b;
  white-space: nowrap;
  pointer-events: none;
  transform: scaleX(0.9);
  transform-origin: left center;
}
.wm-a { font-weight: 300; letter-spacing: -2px; }
.wm-b { font-weight: 900; letter-spacing: 1px; margin-left: 2px; }
</style>
